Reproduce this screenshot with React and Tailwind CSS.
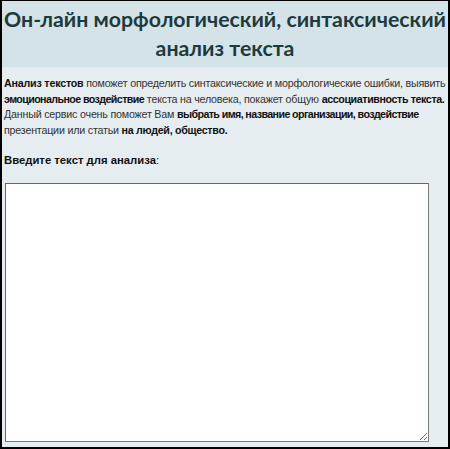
export default function App() {
  return (
    <div className="w-[450px] h-[449px] bg-[#e5edf0] border-2 border-black border-t border-b-2 overflow-hidden flex flex-col">
      <div className="bg-[#d3e3e7] h-[66px] flex flex-col items-center justify-center text-[#1d3a3f] text-[21.3px] font-bold leading-[29px] whitespace-nowrap" style={{ fontFamily: 'Lato, sans-serif' }}>
        <div>Он-лайн морфологический, синтаксический</div>
        <div>анализ текста</div>
      </div>
      <div className="px-[2px] pt-[9px] text-[10.7px] tracking-[-0.2px] leading-[15.7px] text-[#333] whitespace-nowrap" style={{ fontFamily: '"Liberation Sans", Arial, sans-serif' }}>
        <div><b className="text-[#111]">Анализ текстов</b> поможет определить синтаксические и морфологические ошибки, выявить</div>
        <div><b className="text-[#111] tracking-[-0.6px]">эмоциональное воздействие</b> текста на человека, покажет общую <b className="text-[#111] tracking-[-0.4px]">ассоциативность текста.</b></div>
        <div>Данный сервис очень поможет Вам <b className="text-[#111] tracking-[-0.6px]">выбрать имя, название организации, воздействие</b></div>
        <div>презентации или статьи <b className="text-[#111] tracking-[-0.3px]">на людей, общество.</b></div>
        <div className="mt-[14px] text-[11.3px] tracking-normal font-bold text-[#111]">Введите текст для анализа<span className="font-normal">:</span></div>
        <textarea className="mt-[14px] ml-[1px] w-[424px] h-[259px] bg-white border border-[#7a7a7a] border-t-[#666] border-l-[#666] outline-none resize" />
      </div>
    </div>
  );
}
